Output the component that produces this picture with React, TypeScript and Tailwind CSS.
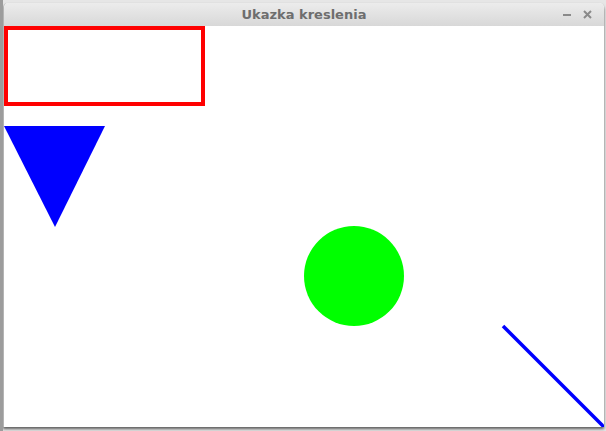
import React from "react";

export default function App() {
  return (
    <div className="w-[606px] h-[431px] overflow-hidden bg-[#e6e6e6] flex pt-[3px] border-l-[3px] border-[#9c9c9c]">
      <div className="w-[601px] h-[424px] flex flex-col rounded-t-[5px] overflow-hidden shadow-[0_2px_3px_rgba(0,0,0,0.6)] bg-white border-l border-[#b4b4b4]">
        <div className="h-[23px] shrink-0 bg-gradient-to-b from-[#ececec] to-[#d8d8d8] grid grid-cols-[1fr_auto_1fr] items-center">
          <div />
          <span className="text-[13px] font-bold text-[#6e6e6e] leading-none" style={{ fontFamily: '"DejaVu Sans", sans-serif' }}>
            Ukazka kreslenia
          </span>
          <div className="flex justify-end items-center gap-[12px] pr-[12px]">
            <div className="w-[8px] h-[2px] bg-[#8a8a8a]" />
            <svg width="9" height="9" viewBox="0 0 9 9">
              <path d="M1 1 L8 8 M8 1 L1 8" stroke="#8a8a8a" strokeWidth="2" />
            </svg>
          </div>
        </div>
        <div className="flex-1 bg-white">
          <svg width="600" height="401" className="block">
            <g shapeRendering="crispEdges">
              <rect x="2" y="2" width="197" height="76" fill="none" stroke="#ff0000" strokeWidth="4" />
              <rect x="199" y="78" width="2" height="2" fill="#ff0000" />
            </g>
            <polygon points="0,100 101,100 51,201" fill="#0000ff" />
            <circle cx="350" cy="250" r="50" fill="#00ff00" />
            <line x1="499" y1="300" x2="601" y2="402" stroke="#0000ff" strokeWidth="3.5" />
          </svg>
        </div>
      </div>
    </div>
  );
}
